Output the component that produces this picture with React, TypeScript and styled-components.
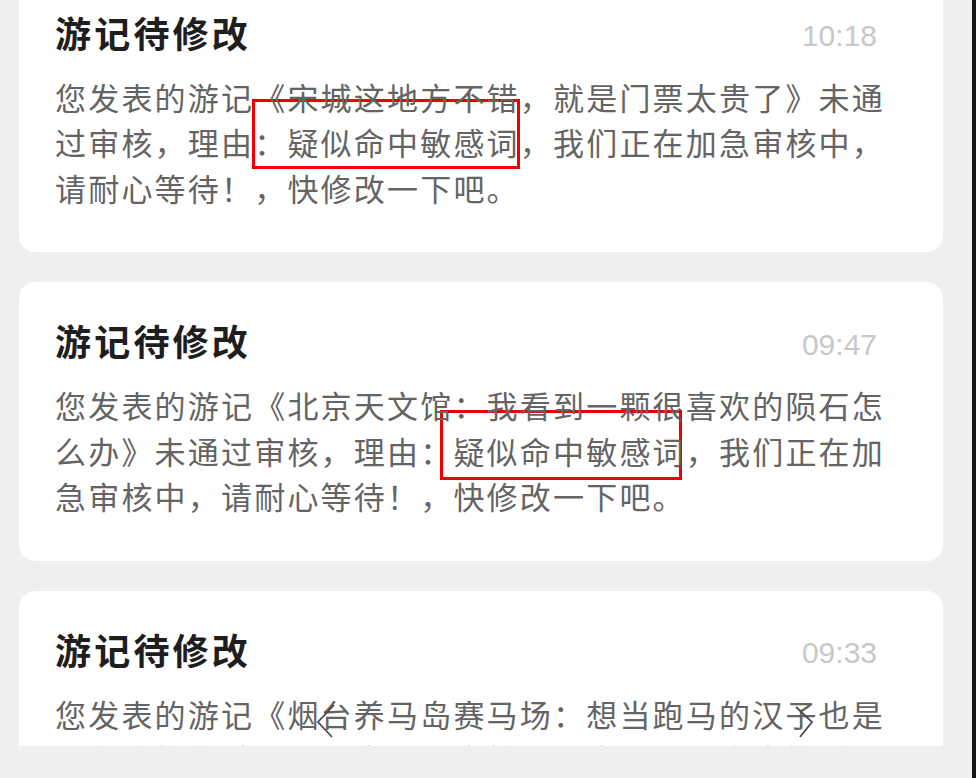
import React from "react";
import styled, { createGlobalStyle } from "styled-components";

const GlobalStyle = createGlobalStyle`
  html, body {
    margin: 0;
    padding: 0;
    background: #efefef;
  }
  body {
    font-family: "Noto Sans CJK SC", "Noto Sans", sans-serif;
  }
`;

const Screen = styled.div`
  display: flex;
  width: 976px;
  height: 778px;
  background: #efefef;
  overflow: hidden;
`;

const Main = styled.main`
  flex: 1;
  display: flex;
  flex-direction: column;
`;

const Viewport = styled.div`
  height: 746px;
  overflow: hidden;
  padding-left: 19px;
`;

const List = styled.div`
  display: flex;
  flex-direction: column;
  gap: 30px;
  width: 924px;
  margin-top: -26.5px;
`;

const Edge = styled.div`
  width: 4px;
  background: #151515;
`;

const Card = styled.article`
  position: relative;
  background: #fff;
  border-radius: 16px;
  padding: 38px 37px 42px 36px;
`;

const Header = styled.header`
  display: flex;
  align-items: center;
  justify-content: space-between;
  height: 40px;
  padding-right: 29px;
`;

const Title = styled.h3`
  margin: 0;
  font-size: 36px;
  font-weight: 700;
  letter-spacing: 3.2px;
  line-height: 40px;
  color: #1e1e1e;
`;

const Time = styled.span`
  font-family: "Liberation Sans", Arial, sans-serif;
  font-size: 30px;
  color: #c8c8c8;
  line-height: 40px;
  margin-top: 9px;
`;

const Body = styled.p`
  position: relative;
  margin: 22px 0 0 0;
  width: 850px;
  font-size: 31px;
  letter-spacing: 2.2px;
  line-height: 45.5px;
  color: #646464;
`;

const Text = styled.span`
  position: relative;
`;

const Mark = styled.span<{ $x: number; $y: number; $w: number; $h: number }>`
  position: absolute;
  left: ${(p) => p.$x}px;
  top: ${(p) => p.$y}px;
  width: ${(p) => p.$w}px;
  height: ${(p) => p.$h}px;
  box-sizing: border-box;
  border: 3px solid #f20000;
`;

const Arrow = styled.svg<{ $x: number }>`
  position: absolute;
  left: ${(p) => p.$x}px;
  top: 112px;
  width: 22px;
  height: 38px;
  z-index: 2;
`;

type Notice = {
  time: string;
  text: string;
  mark: { x: number; y: number; w: number; h: number };
};

const notices: Notice[] = [
  {
    time: "10:18",
    text: "您发表的游记《宋城这地方不错，就是门票太贵了》未通过审核，理由：疑似命中敏感词，我们正在加急审核中，请耐心等待！，快修改一下吧。",
    mark: { x: 197, y: 25.5, w: 268, h: 70 },
  },
  {
    time: "09:47",
    text: "您发表的游记《北京天文馆：我看到一颗很喜欢的陨石怎么办》未通过审核，理由：疑似命中敏感词，我们正在加急审核中，请耐心等待！，快修改一下吧。",
    mark: { x: 385, y: 27.5, w: 242, h: 70 },
  },
];

const lastText =
  "您发表的游记《烟台养马岛赛马场：想当跑马的汉子也是一名合格的骑手吗？未通过审核，理由：疑似命中敏感词，我们正在加急审核中，请耐心等待！";

export default function App() {
  return (
    <>
      <GlobalStyle />
      <Screen>
        <Main>
          <Viewport>
            <List>
              {notices.map((n) => (
                <Card key={n.time}>
                  <Header>
                    <Title>游记待修改</Title>
                    <Time>{n.time}</Time>
                  </Header>
                  <Body>
                    <Mark $x={n.mark.x} $y={n.mark.y} $w={n.mark.w} $h={n.mark.h} />
                    <Text>{n.text}</Text>
                  </Body>
                </Card>
              ))}
              <Card>
                <Header>
                  <Title>游记待修改</Title>
                  <Time>09:33</Time>
                </Header>
                <Body>
                  <Text>{lastText}</Text>
                </Body>
                <Arrow $x={297} viewBox="0 0 22 38">
                  <polyline points="18,2 2,19 16,34" fill="none" stroke="#4a4a4a" strokeWidth="1.8" />
                </Arrow>
                <Arrow $x={775} viewBox="0 0 22 38">
                  <polyline points="2,4 18,19 6,34" fill="none" stroke="#4a4a4a" strokeWidth="1.8" />
                </Arrow>
              </Card>
            </List>
          </Viewport>
        </Main>
        <Edge />
      </Screen>
    </>
  );
}
